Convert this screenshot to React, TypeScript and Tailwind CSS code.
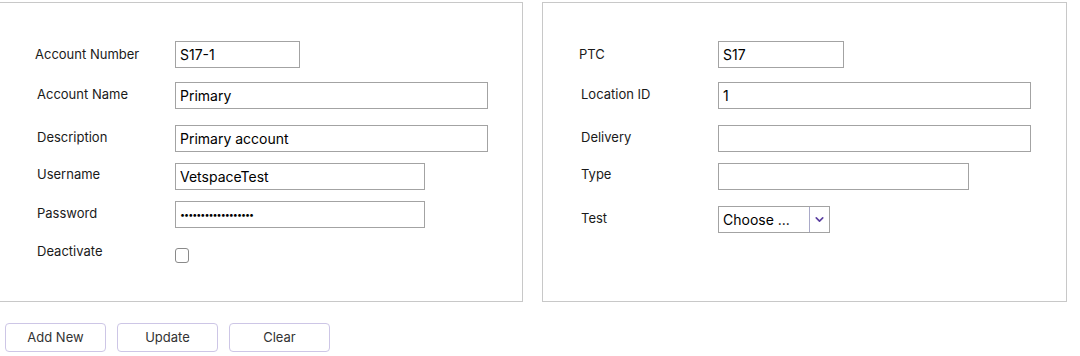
import { ChevronDown } from 'lucide-react';

const font = { fontFamily: 'Inter, "Noto Sans", sans-serif' };

function Field({ label, value, w, type = 'text', labelClass = '', lw = 'w-[138px]' }: { label: string; value: string; w: string; type?: string; labelClass?: string; lw?: string }) {
  return (
    <div className="flex items-center">
      <label className={`${lw} shrink-0 text-[13px] text-[#1a1a1a] ${labelClass}`}>{label}</label>
      <input
        readOnly
        type={type}
        value={value}
        className={`${w} h-[27px] border border-[#a3a3a3] bg-white px-[4px] outline-none text-black ${type === 'password' ? 'text-[9px] tracking-[-1px]' : 'text-[14px]'}`}
        style={font}
      />
    </div>
  );
}

export default function App() {
  return (
    <div className="bg-white w-[1080px] h-[356px] pt-[2px] overflow-hidden" style={font}>
      <div className="flex gap-[19px] -ml-[2px]">
        <section className="w-[525px] h-[300px] border border-[#c8c8c8] pl-[38px] pt-[38px]">
          <Field label="Account Number" value="S17-1" w="w-[125px]" labelClass="-ml-[2px] mr-[2px]" />
          <div className="mt-[14px]"><Field label="Account Name" value="Primary" w="w-[313px]" labelClass="-mt-[2px]" /></div>
          <div className="mt-[16px]"><Field label="Description" value="Primary account" w="w-[313px]" labelClass="-mt-[2px]" /></div>
          <div className="mt-[11px]"><Field label="Username" value="VetspaceTest" w="w-[250px]" labelClass="-mt-[4px]" /></div>
          <div className="mt-[11px]"><Field label="Password" value="vetspacepassword12" w="w-[250px]" type="password" labelClass="-mt-[2px]" /></div>
          <div className="mt-[16px] flex items-start">
            <label className="w-[138px] shrink-0 text-[13px] text-[#1a1a1a] -mt-[2px]">Deactivate</label>
            <span className="mt-[4px] w-[14px] h-[15px] rounded-[3px] border border-[#8a8a8a] bg-white" />
          </div>
        </section>
        <section className="w-[525px] h-[300px] border border-[#c8c8c8] pl-[38px] pt-[38px]">
          <Field label="PTC" value="S17" w="w-[126px]" lw="w-[137px]" labelClass="-ml-[2px] mr-[2px]" />
          <div className="mt-[14px]"><Field label="Location ID" value="1" w="w-[313px]" lw="w-[137px]" labelClass="-mt-[2px]" /></div>
          <div className="mt-[16px]"><Field label="Delivery" value="" w="w-[313px]" lw="w-[137px]" labelClass="-mt-[2px]" /></div>
          <div className="mt-[11px]"><Field label="Type" value="" w="w-[251px]" lw="w-[137px]" labelClass="-mt-[4px]" /></div>
          <div className="mt-[16px] flex items-center">
            <label className="w-[137px] shrink-0 text-[13px] text-[#1a1a1a] -mt-[2px]">Test</label>
            <div className="flex h-[27px] w-[112px] border border-[#a3a3a3] bg-white">
              <span className="flex-1 flex items-center pl-[4px] text-[14px] text-black">Choose ...</span>
              <span className="w-[20px] flex items-center justify-center border-l border-[#a9a9c8]">
                <ChevronDown size={13} strokeWidth={3} className="text-[#5b3fa0]" />
              </span>
            </div>
          </div>
        </section>
      </div>
      <div className="flex gap-[11px] pl-[5px] mt-[21px]">
        {['Add New', 'Update', 'Clear'].map(t => (
          <button key={t} className="w-[101px] h-[29px] rounded-[4px] border border-[#cdc6e6] bg-white text-[13px] text-[#333]">
            {t}
          </button>
        ))}
      </div>
    </div>
  );
}
